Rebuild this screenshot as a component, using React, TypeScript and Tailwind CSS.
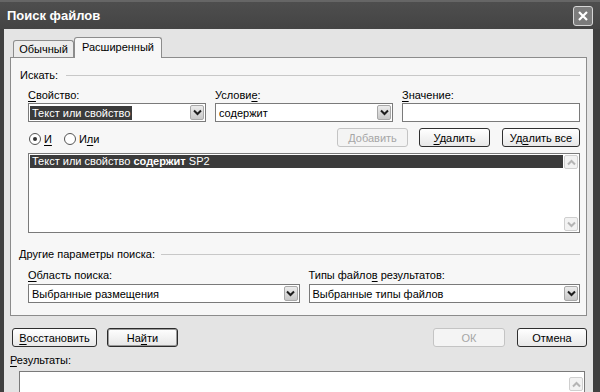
import React from "react";

const U = ({ children }: { children: React.ReactNode }) => (
  <span className="underline underline-offset-[2px]">{children}</span>
);

function Chevron({ color = "#1e1e1e", up = false }: { color?: string; up?: boolean }) {
  return (
    <svg width="9" height="7" viewBox="0 0 9 7">
      <path
        d={up ? "M1 5.5 L4.5 2 L8 5.5" : "M1 1.5 L4.5 5 L8 1.5"}
        fill="none"
        stroke={color}
        strokeWidth="2"
      />
    </svg>
  );
}

function DropBtn() {
  return (
    <div className="flex h-[15px] w-[14px] items-center justify-center rounded-[2px] border border-[#a8a8a8] bg-gradient-to-b from-[#ececec] to-[#c8c8c8]">
      <Chevron />
    </div>
  );
}

function Select({ text, highlighted = false }: { text: string; highlighted?: boolean }) {
  return (
    <div className="flex h-[19px] items-center border border-[#7a7a7a] bg-white pl-[1px] pr-[1px]">
      <div className="flex-1 overflow-hidden whitespace-nowrap">
        <span className={highlighted ? "bg-[#3b3b3b] px-[2px] py-[1px] text-white" : "px-[2px]"}>{text}</span>
      </div>
      <DropBtn />
    </div>
  );
}

function Btn({
  children,
  w,
  disabled = false,
  def = false,
}: {
  children: React.ReactNode;
  w: string;
  disabled?: boolean;
  def?: boolean;
}) {
  return (
    <div
      className={`flex h-[19px] items-center justify-center rounded-[3px] border ${w} ${
        disabled
          ? "border-[#c4c4c4] bg-[#f4f4f4] text-[#a6a6a6]"
          : def
          ? "border-[#2a2a2a] bg-gradient-to-b from-white to-[#e6e6e6] text-black shadow-[inset_0_0_0_1px_#9a9a9a]"
          : "border-[#2f2f2f] bg-gradient-to-b from-white to-[#e8e8e8] text-black"
      }`}
    >
      {children}
    </div>
  );
}

function Radio({ checked }: { checked: boolean }) {
  return (
    <div className="flex h-[12px] w-[12px] items-center justify-center rounded-full border border-[#555] bg-white">
      {checked && <div className="h-[4px] w-[4px] rounded-full bg-[#333]" />}
    </div>
  );
}

function ScrollBtn({ up }: { up: boolean }) {
  return (
    <div className="flex h-[14px] w-[14px] items-center justify-center rounded-[2px] border border-[#cfcfcf] bg-[#f2f2f2]">
      <Chevron color="#b4b4b4" up={up} />
    </div>
  );
}

export default function App() {
  return (
    <div className="flex h-[392px] w-[600px] flex-col overflow-hidden bg-[#404040] text-[11px] leading-[14px] text-black [font-family:'Liberation_Sans',Arial,sans-serif]">
      {/* Title bar */}
      <div className="flex h-[29px] shrink-0 items-center justify-between border-t-2 border-[#666] bg-gradient-to-b from-[#4e4e4e] to-[#444] pl-[7px] pr-[7px]">
        <span className="text-[13px] font-bold text-white">Поиск файлов</span>
        <div className="flex h-[20px] w-[20px] items-center justify-center rounded-[3px] border border-[#d6d6d6] bg-[#7c7c7c]">
          <svg width="12" height="12" viewBox="0 0 12 12">
            <path d="M2 2 L10 10 M10 2 L2 10" stroke="white" strokeWidth="2.2" />
          </svg>
        </div>
      </div>

      {/* Body */}
      <div className="ml-[4px] mr-[7px] flex flex-1 flex-col bg-[#e4e4e4]">
        {/* Tabs */}
        <div className="ml-[9px] mt-[8px] flex h-[20px] items-end">
          <div className="flex h-[17px] w-[61px] items-center justify-center rounded-t-[3px] border border-b-0 border-[#8c8c8c] bg-[#ececec]">
            Обычный
          </div>
          <div className="relative z-10 mb-[-1px] flex h-[21px] w-[88px] items-center justify-center rounded-t-[3px] border border-b-0 border-[#8c8c8c] bg-[#f7f7f7] pb-[2px]">
            Расширенный
          </div>
        </div>

        {/* Panel */}
        <div className="mx-[6px] flex flex-col border border-[#8c8c8c] bg-[#f7f7f7] pb-[12px] pl-[9px] pr-[6px] pt-[10px]">
          <div className="flex items-center">
            <span>Искать:</span>
            <div className="ml-[8px] h-px flex-1 bg-[#c8c8c8]" />
          </div>

          <div className="ml-[8px] flex flex-col">
            <div className="mt-[6px] grid grid-cols-3 gap-x-[9px]">
              <div className="flex flex-col gap-[1px]">
                <span>
                  <U>С</U>войство:
                </span>
                <Select text="Текст или свойство" highlighted />
              </div>
              <div className="flex flex-col gap-[1px]">
                <span>
                  Услови<U>е</U>:
                </span>
                <Select text="содержит" />
              </div>
              <div className="flex flex-col gap-[1px]">
                <span>
                  <U>З</U>начение:
                </span>
                <div className="h-[19px] border border-[#7a7a7a] bg-white" />
              </div>
            </div>

            <div className="mt-[6px] flex h-[19px] items-center">
              <div className="ml-[1px] mt-[3px] flex items-center gap-[3px]">
                <Radio checked />
                <span>
                  <U>И</U>
                </span>
              </div>
              <div className="ml-[12px] mt-[3px] flex items-center gap-[3px]">
                <Radio checked={false} />
                <span>
                  И<U>л</U>и
                </span>
              </div>
              <div className="ml-auto flex items-center">
                <Btn w="w-[71px]" disabled>
                  Добавить
                </Btn>
                <div className="ml-[11px]">
                  <Btn w="w-[71px]">
                    <span>
                      <U>У</U>далить
                    </span>
                  </Btn>
                </div>
                <div className="ml-[12px]">
                  <Btn w="w-[78px]">
                    <span>
                      Уд<U>а</U>лить все
                    </span>
                  </Btn>
                </div>
              </div>
            </div>

            <div className="mt-[6px] flex h-[80px] border border-[#7a7a7a] bg-white p-[1px]">
              <div className="flex-1">
                <div className="h-[13px] whitespace-nowrap bg-[#3b3b3b] pl-[2px] leading-[13px] text-white">
                  Текст или свойство <b>содержит</b> SP2
                </div>
              </div>
              <div className="flex w-[15px] flex-col justify-between pl-[1px]">
                <ScrollBtn up />
                <ScrollBtn up={false} />
              </div>
            </div>
          </div>

          <div className="mt-[14px] flex items-center">
            <span className="-ml-[1px]">Другие параметры поиска:</span>
            <div className="ml-[6px] h-px flex-1 bg-[#c8c8c8]" />
          </div>

          <div className="ml-[8px] mt-[7px] grid grid-cols-2 gap-x-[9px]">
            <div className="flex flex-col gap-[2px]">
              <span>
                <U>О</U>бласть поиска:
              </span>
              <Select text="Выбранные размещения" />
            </div>
            <div className="flex flex-col gap-[2px]">
              <span>
                Типы файло<U>в</U> результатов:
              </span>
              <Select text="Выбранные типы файлов" />
            </div>
          </div>
        </div>

        {/* Bottom buttons */}
        <div className="ml-[8px] mr-[6px] mt-[12px] flex items-center">
          <Btn w="w-[85px]">
            <span>
              <U>В</U>осстановить
            </span>
          </Btn>
          <div className="ml-[10px]">
            <Btn w="w-[71px]" def>
              <span>
                На<U>й</U>ти
              </span>
            </Btn>
          </div>
          <div className="ml-auto">
            <Btn w="w-[72px]" disabled>
              ОК
            </Btn>
          </div>
          <div className="ml-[12px]">
            <Btn w="w-[70px]">Отмена</Btn>
          </div>
        </div>

        <div className="ml-[6px] mt-[6px]">
          <U>Р</U>езультаты:
        </div>

        <div className="ml-[15px] mr-[8px] mt-[4px] flex h-[40px] justify-end border border-[#7a7a7a] bg-white pr-[1px] pt-[5px]">
          <ScrollBtn up />
        </div>
      </div>
    </div>
  );
}
